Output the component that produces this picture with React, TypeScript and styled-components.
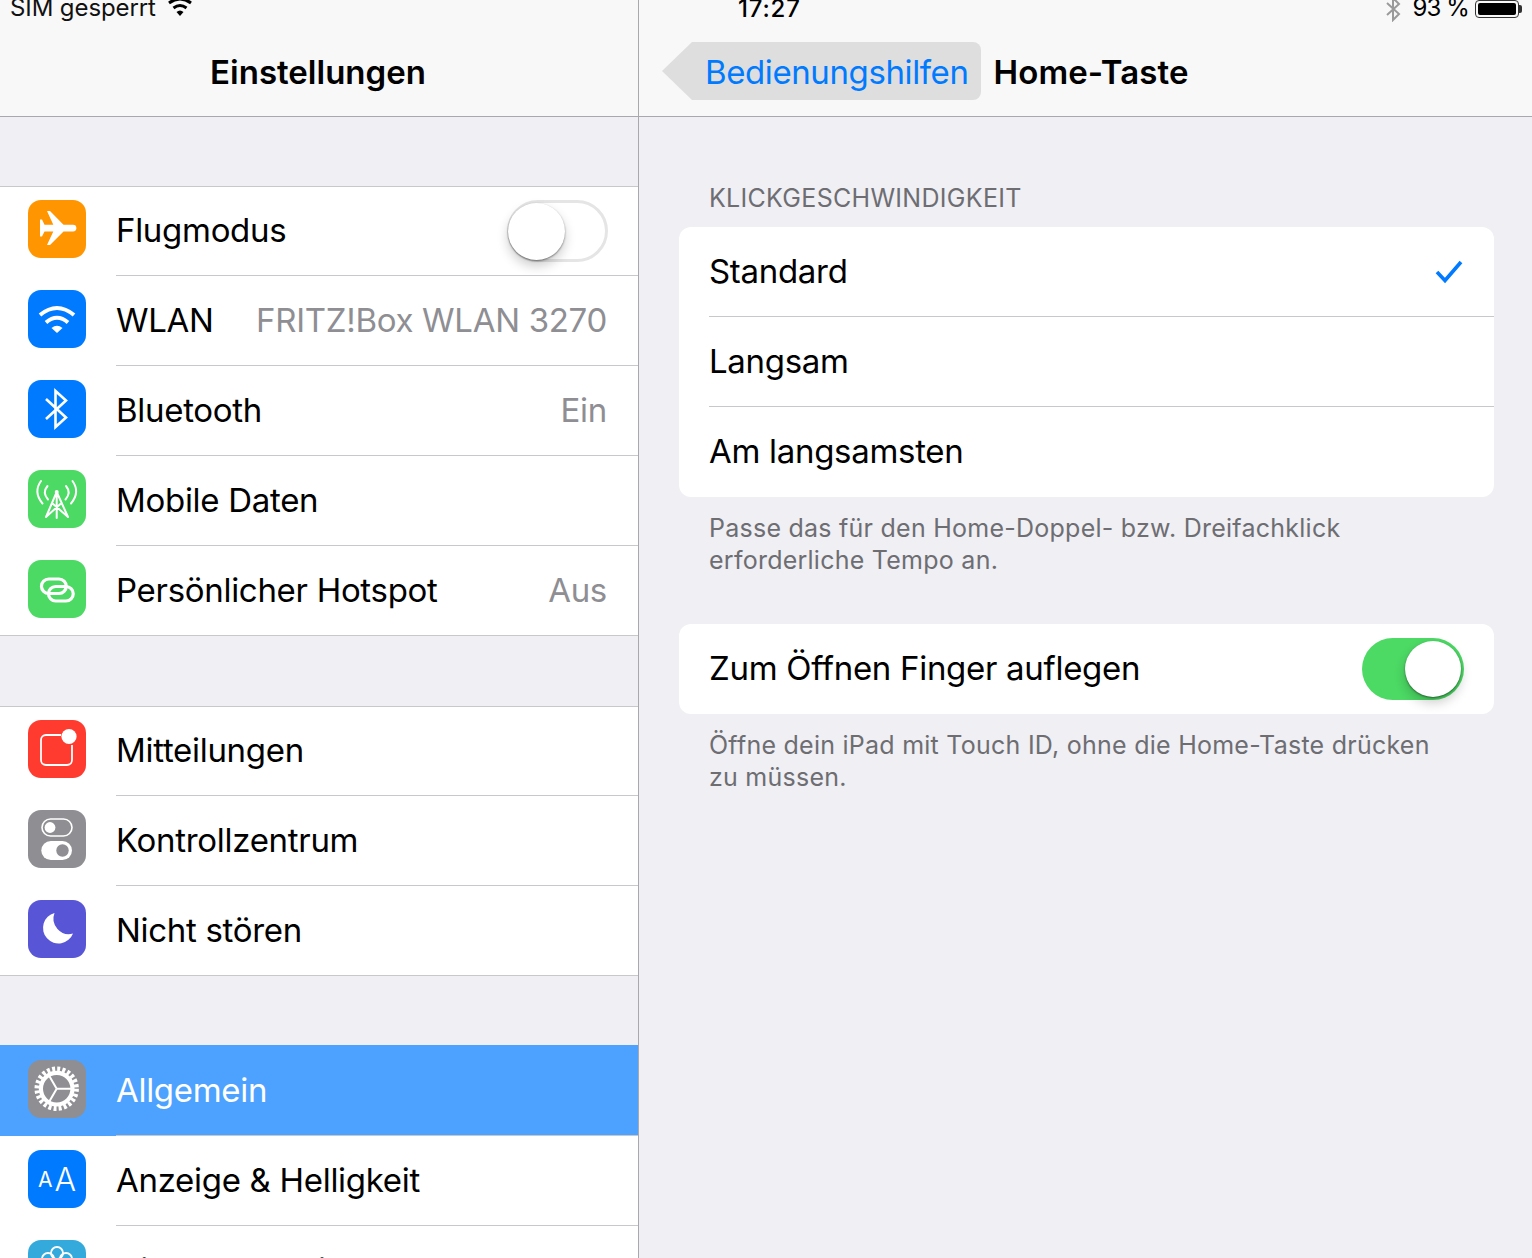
import React from "react";
import styled, { createGlobalStyle } from "styled-components";

const GlobalStyle = createGlobalStyle`
    html, body {
        margin: 0;
        padding: 0;
        background: #efeff4;
    }
    * {
        box-sizing: border-box;
    }
`;

const Page = styled.div`
    display: grid;
    grid-template-columns: 639px 1fr;
    width: 1532px;
    height: 1258px;
    overflow: hidden;
    font-family: Inter, "Liberation Sans", sans-serif;
    color: #000;
`;

const Pane = styled.section<{ $divider?: boolean }>`
    height: 1258px;
    overflow: hidden;
    background: #efeff4;
    border-right: ${({ $divider }) => ($divider ? "1px solid #a9a9ad" : "none")};
`;

const NavBar = styled.header`
    height: 117px;
    background: #f8f8f8;
    border-bottom: 1px solid #a9a9ad;
    overflow: hidden;
`;

const StatusBar = styled.div<{ $pad: string }>`
    display: flex;
    align-items: center;
    justify-content: space-between;
    height: 20px;
    margin-top: -2px;
    padding: ${({ $pad }) => $pad};
    font-size: 24px;
    line-height: 24px;
    white-space: nowrap;
`;

const StatusGroup = styled.div`
    display: flex;
    align-items: center;
`;

const Carrier = styled.span`
    width: 158px;
    letter-spacing: -0.1px;
    color: #111;
`;

const Time = styled.span`
    margin-top: 1px;
    font-weight: 500;
    letter-spacing: 0.8px;
`;

const Percent = styled.span`
    margin: 0 6px 0 11px;
    letter-spacing: -0.9px;
`;

const TitleRow = styled.div`
    display: flex;
    align-items: center;
    height: 58px;
    margin-top: 24px;
`;

const CenterTitle = styled.h1`
    flex: 1;
    margin: 2px 0 0;
    padding-right: 2px;
    text-align: center;
    font-size: 33px;
    line-height: 58px;
    font-weight: 600;
    letter-spacing: 0;
`;

const DetailTitle = styled.h1`
    margin: 2px 0 0 13px;
    font-size: 33px;
    line-height: 58px;
    font-weight: 600;
    letter-spacing: 0.1px;
`;

const BackPill = styled.div`
    position: relative;
    margin-left: 53px;
    height: 58px;
    padding: 0 12px 0 13px;
    background: #dedede;
    border-radius: 0 8px 8px 0;
    color: #007aff;
    font-size: 33px;
    line-height: 60px;
    letter-spacing: -0.4px;
    white-space: nowrap;

    &::before {
        content: "";
        position: absolute;
        left: -30px;
        top: 0;
        width: 30px;
        height: 58px;
        background: #dedede;
        clip-path: polygon(100% 0, 0 50%, 100% 100%);
    }
`;

const SideList = styled.div`
    padding-top: 69px;
`;

const Group = styled.div`
    margin-bottom: 70px;
    background: #fff;
`;

const Row = styled.div<{ $selected?: boolean; $last?: boolean }>`
    position: relative;
    display: flex;
    align-items: center;
    height: ${({ $selected }) => ($selected ? "91px" : "90px")};
    margin-top: ${({ $selected }) => ($selected ? "-1px" : "0")};
    padding: 0 31px 4px 28px;
    background: ${({ $selected }) => ($selected ? "#4da2ff" : "#fff")};
    color: ${({ $selected }) => ($selected ? "#fff" : "#000")};

    &:first-child {
        padding-bottom: ${({ $selected }) => ($selected ? "4px" : "5px")};
        border-top: 1px solid ${({ $selected }) => ($selected ? "#4da2ff" : "#c8c7cc")};
    }

    &::after {
        content: "";
        position: absolute;
        right: 0;
        bottom: 0;
        left: ${({ $last }) => ($last ? "0" : "116px")};
        height: 1px;
        background: #c8c7cc;
    }
`;

const Tile = styled.div<{ $bg: string }>`
    flex: none;
    display: flex;
    align-items: center;
    justify-content: center;
    width: 58px;
    height: 58px;
    margin-right: 30px;
    border-radius: 13px;
    background: ${({ $bg }) => $bg};
    color: #fff;
`;

const TileSvg = styled.svg`
    display: block;
    width: 58px;
    height: 58px;
`;

const SmallA = styled.span`
    font-size: 21px;
    font-weight: 400;
    margin-right: 2px;
`;

const BigA = styled.span`
    font-size: 32px;
    font-weight: 300;
`;

const Label = styled.span`
    flex: 1;
    margin-top: 2px;
    font-size: 33px;
    line-height: 40px;
    letter-spacing: -0.3px;
    white-space: nowrap;
`;

const Value = styled.span`
    margin-top: 2px;
    font-size: 33px;
    line-height: 40px;
    letter-spacing: -0.3px;
    color: #8e8e93;
    white-space: nowrap;
`;

const Toggle = styled.div<{ $on?: boolean }>`
    position: relative;
    flex: none;
    width: ${({ $on }) => ($on ? "102px" : "101px")};
    height: 62px;
    margin: 4px -1px 0 0;
    border-radius: 31px;
    background: ${({ $on }) => ($on ? "#4cd964" : "#fff")};
    border: ${({ $on }) => ($on ? "none" : "3px solid #e5e5e5")};

    &::after {
        content: "";
        position: absolute;
        top: ${({ $on }) => ($on ? "3px" : "0")};
        ${({ $on }) => ($on ? "right: 3px;" : "left: -2px;")}
        width: ${({ $on }) => ($on ? "56px" : "57px")};
        height: ${({ $on }) => ($on ? "56px" : "57px")};
        border-radius: 50%;
        background: #fff;
        box-shadow: 0 6px 12px rgba(0, 0, 0, 0.2), 0 1px 2px rgba(0, 0, 0, 0.45);
    }
`;

const Detail = styled.div`
    padding: 0 38px 0 40px;
`;

const SectionLabel = styled.div`
    height: 110px;
    padding: 67px 0 0 30px;
    font-size: 25px;
    line-height: 28px;
    letter-spacing: 0.3px;
    color: #6d6d72;
    white-space: nowrap;
`;

const Card = styled.div`
    overflow: hidden;
    background: #fff;
    border-radius: 12px;
`;

const OptionRow = styled.div<{ $last?: boolean }>`
    position: relative;
    display: flex;
    align-items: center;
    height: 90px;
    padding: 0 31px 4px 30px;

    &::after {
        content: "";
        display: ${({ $last }) => ($last ? "none" : "block")};
        position: absolute;
        right: 0;
        bottom: 0;
        left: 30px;
        height: 1px;
        background: #c8c7cc;
    }
`;

const FooterNote = styled.p<{ $gap: string }>`
    margin: 0;
    height: ${({ $gap }) => $gap};
    padding: 15px 30px 0 30px;
    font-size: 25px;
    line-height: 32px;
    letter-spacing: 0.25px;
    color: #6d6d72;
    white-space: nowrap;
`;

const BatteryFrame = styled.div`
    position: relative;
    width: 44px;
    height: 18px;
    margin-top: 1px;
    padding: 2px;
    border: 1px solid #333;
    border-radius: 4px;

    &::after {
        content: "";
        position: absolute;
        right: -4px;
        top: 4px;
        width: 3px;
        height: 8px;
        border-radius: 0 2px 2px 0;
        background: #333;
    }
`;

const BatteryFill = styled.div`
    height: 100%;
    background: #000;
    border-radius: 2px;
`;

const WifiGlyph = styled.svg`
    flex: none;
    width: 28px;
    height: 20px;
    margin-left: -2px;
    color: #000;
`;

const BluetoothGlyph = styled.svg`
    flex: none;
    width: 18px;
    height: 26px;
    margin-top: 2px;
    color: #9a9a9a;
`;

const Check = styled.svg`
    flex: none;
    width: 28px;
    height: 24px;
    margin-top: 4px;
    color: #007aff;
`;

const PlaneIcon = () => (
    <TileSvg viewBox="0 0 58 58">
        <path
            fill="#fff"
            d="M19 11h3l13.5 13.7H45a3.4 3.4 0 0 1 0 6.8H35.5L22 45h-3l6.3-13.5H16.5L14 36.5h-2v-17h2l2.5 5.2h8.8z"
        />
    </TileSvg>
);

const WifiIcon = () => (
    <TileSvg viewBox="0 0 58 58">
        <g fill="none" stroke="#fff" strokeWidth="4">
            <path d="M12 25 Q29 11 46 25" />
            <path d="M18 32.5 Q29 23 40 32.5" />
        </g>
        <path fill="#fff" d="M23.5 38 Q29 33.5 34.5 38 L29 43z" />
    </TileSvg>
);

const BluetoothIcon = () => (
    <TileSvg viewBox="0 0 58 58">
        <path
            fill="none"
            stroke="#fff"
            strokeWidth="2.6"
            d="M18 19 L38 37.5 L27.5 47 V11 L38 20.5 L18 39"
        />
    </TileSvg>
);

const AntennaIcon = () => (
    <TileSvg viewBox="0 0 58 58">
        <g fill="none" stroke="#fff" strokeWidth="2" strokeLinecap="round">
            <path d="M13 11 Q5 22 14.5 33.5" />
            <path d="M19.5 16 Q14 22.5 20 29.5" />
            <path d="M44.5 11 Q52.5 22 43 33.5" />
            <path d="M38 16 Q43.5 22.5 37.5 29.5" />
            <path d="M28.7 22 L18 47 M28.7 22 L40 47 M28.7 22 V48 M24 33 L39.5 46.5 M33.5 33 L18.5 46.5" />
        </g>
        <circle cx="28.7" cy="22" r="2" fill="#fff" />
    </TileSvg>
);

const HotspotIcon = () => (
    <TileSvg viewBox="0 0 58 58">
        <g fill="none" stroke="#fff" strokeWidth="3.2">
            <path d="M20.7 19 H31 a7.2 7.2 0 0 1 0 14.5 H20.7 a7.2 7.2 0 0 1 0-14.5z" />
            <path d="M38 26.5 a7.2 7.2 0 0 1 0 14.5 H27.7 a7.2 7.2 0 0 1-7.2-7.2 a7.2 7.2 0 0 1 7.2-7.3z" />
        </g>
    </TileSvg>
);

const NotificationIcon = () => (
    <TileSvg viewBox="0 0 58 58">
        <path
            fill="none"
            stroke="#fff"
            strokeWidth="1.8"
            d="M33 15 H18 a5 5 0 0 0-5 5 V40 a5 5 0 0 0 5 5 H39 a5 5 0 0 0 5-5 V25"
        />
        <circle cx="41" cy="16.5" r="7.6" fill="#fff" />
    </TileSvg>
);

const ControlIcon = () => (
    <TileSvg viewBox="0 0 58 58">
        <rect x="14" y="9" width="30" height="17" rx="8.5" fill="none" stroke="#fff" strokeWidth="1.6" />
        <circle cx="22" cy="17.5" r="5.4" fill="#fff" />
        <rect x="13.3" y="31" width="30.7" height="19" rx="9.5" fill="#fff" />
        <circle cx="34.5" cy="40.5" r="6.2" fill="#8e8e93" />
    </TileSvg>
);

const MoonIcon = () => (
    <TileSvg viewBox="0 0 58 58">
        <path fill="#fff" d="M26.5 13 A15.5 15.5 0 1 0 45 33.5 A15.5 15.5 0 0 1 26.5 13z" />
    </TileSvg>
);

const GearIcon = () => (
    <TileSvg viewBox="0 0 58 58">
        <g fill="none" stroke="#fff">
            <circle cx="28.7" cy="28.7" r="19.8" strokeWidth="4.8" strokeDasharray="3 2.18" />
            <circle cx="28.7" cy="28.7" r="15.8" strokeWidth="4.2" />
            <path strokeWidth="2" d="M28.7 28.7 H44 M28.7 28.7 L21 15.4 M28.7 28.7 L21 42" />
        </g>
    </TileSvg>
);

const FlowerIcon = () => (
    <TileSvg viewBox="0 0 58 58">
        <g fill="none" stroke="#fff" strokeWidth="1.8">
            <circle cx="29" cy="13" r="6" />
            <circle cx="20" cy="19" r="6" />
            <circle cx="38" cy="19" r="6" />
        </g>
    </TileSvg>
);

const StatusWifi = () => (
    <WifiGlyph viewBox="0 0 28 20">
        <g fill="none" stroke="currentColor" strokeWidth="3">
            <path d="M3 5 Q14 -3 25 5" />
            <path d="M7.5 10 Q14 5 20.5 10" />
        </g>
        <path fill="currentColor" d="M10.5 14 Q14 11 17.5 14 L14 18z" />
    </WifiGlyph>
);

const StatusBluetooth = () => (
    <BluetoothGlyph viewBox="0 0 18 26">
        <path
            fill="none"
            stroke="currentColor"
            strokeWidth="2"
            d="M3 7 L15 18 L9 24 V2 L15 8 L3 19"
        />
    </BluetoothGlyph>
);

const Checkmark = () => (
    <Check viewBox="0 0 28 24">
        <path fill="none" stroke="currentColor" strokeWidth="3.6" d="M2 12 L10 20.5 L26 2" />
    </Check>
);

const App = () => {
    return (
        <>
            <GlobalStyle />
            <Page>
                <Pane $divider>
                    <NavBar>
                        <StatusBar $pad="0 0 0 10px">
                            <StatusGroup>
                                <Carrier>SIM gesperrt</Carrier>
                                <StatusWifi />
                            </StatusGroup>
                        </StatusBar>
                        <TitleRow>
                            <CenterTitle>Einstellungen</CenterTitle>
                        </TitleRow>
                    </NavBar>
                    <SideList>
                        <Group>
                            <Row>
                                <Tile $bg="#ff9500"><PlaneIcon /></Tile>
                                <Label>Flugmodus</Label>
                                <Toggle />
                            </Row>
                            <Row>
                                <Tile $bg="#007aff"><WifiIcon /></Tile>
                                <Label>WLAN</Label>
                                <Value>FRITZ!Box WLAN 3270</Value>
                            </Row>
                            <Row>
                                <Tile $bg="#007aff"><BluetoothIcon /></Tile>
                                <Label>Bluetooth</Label>
                                <Value>Ein</Value>
                            </Row>
                            <Row>
                                <Tile $bg="#4cd964"><AntennaIcon /></Tile>
                                <Label>Mobile Daten</Label>
                            </Row>
                            <Row $last>
                                <Tile $bg="#4cd964"><HotspotIcon /></Tile>
                                <Label>Persönlicher Hotspot</Label>
                                <Value>Aus</Value>
                            </Row>
                        </Group>
                        <Group>
                            <Row>
                                <Tile $bg="#ff3b30"><NotificationIcon /></Tile>
                                <Label>Mitteilungen</Label>
                            </Row>
                            <Row>
                                <Tile $bg="#8e8e93"><ControlIcon /></Tile>
                                <Label>Kontrollzentrum</Label>
                            </Row>
                            <Row $last>
                                <Tile $bg="#5856d6"><MoonIcon /></Tile>
                                <Label>Nicht stören</Label>
                            </Row>
                        </Group>
                        <Group>
                            <Row $selected>
                                <Tile $bg="#8e8e93"><GearIcon /></Tile>
                                <Label>Allgemein</Label>
                            </Row>
                            <Row>
                                <Tile $bg="#007aff">
                                    <SmallA>A</SmallA>
                                    <BigA>A</BigA>
                                </Tile>
                                <Label>Anzeige &amp; Helligkeit</Label>
                            </Row>
                            <Row $last>
                                <Tile $bg="#34aadc"><FlowerIcon /></Tile>
                                <Label>Hintergrundbild</Label>
                            </Row>
                        </Group>
                    </SideList>
                </Pane>
                <Pane>
                    <NavBar>
                        <StatusBar $pad="0 13px 0 99px">
                            <Time>17:27</Time>
                            <StatusGroup>
                                <StatusBluetooth />
                                <Percent>93 %</Percent>
                                <BatteryFrame>
                                    <BatteryFill />
                                </BatteryFrame>
                            </StatusGroup>
                        </StatusBar>
                        <TitleRow>
                            <BackPill>Bedienungshilfen</BackPill>
                            <DetailTitle>Home-Taste</DetailTitle>
                        </TitleRow>
                    </NavBar>
                    <Detail>
                        <SectionLabel>KLICKGESCHWINDIGKEIT</SectionLabel>
                        <Card>
                            <OptionRow>
                                <Label>Standard</Label>
                                <Checkmark />
                            </OptionRow>
                            <OptionRow>
                                <Label>Langsam</Label>
                            </OptionRow>
                            <OptionRow $last>
                                <Label>Am langsamsten</Label>
                            </OptionRow>
                        </Card>
                        <FooterNote $gap="127px">
                            Passe das für den Home-Doppel- bzw. Dreifachklick
                            <br />
                            erforderliche Tempo an.
                        </FooterNote>
                        <Card>
                            <OptionRow $last>
                                <Label>Zum Öffnen Finger auflegen</Label>
                                <Toggle $on />
                            </OptionRow>
                        </Card>
                        <FooterNote $gap="100px">
                            Öffne dein iPad mit Touch ID, ohne die Home-Taste drücken
                            <br />
                            zu müssen.
                        </FooterNote>
                    </Detail>
                </Pane>
            </Page>
        </>
    );
};

export default App;
